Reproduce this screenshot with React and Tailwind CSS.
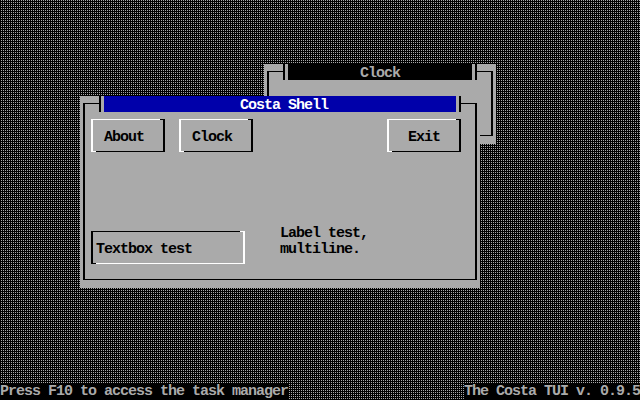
import React from "react";

function Button({ label, pad, className = "" }) {
  return (
    <div className={"h-12 w-20 shrink-0 pl-[3px] pt-[7px] " + className}>
      <div className="relative h-[33px] w-[74px] border-b border-l-2 border-r-2 border-t border-b-black border-l-white border-r-black border-t-white">
        <div className="absolute -top-px right-[-2px] h-px w-[5px] bg-black" />
        <div className="absolute -bottom-px left-[-2px] h-px w-[5px] bg-white" />
        <div className={"mt-2 h-4 whitespace-pre text-black " + pad}>{label}</div>
      </div>
    </div>
  );
}

function TitleBar({ title, active, pad }) {
  return (
    <div className="flex h-4 shrink-0">
      <div className="flex h-4 w-6 shrink-0">
        <div className="w-[3px] shrink-0" />
        <div className="mt-[7px] h-[9px] w-4 shrink-0 border-l-2 border-t border-black" />
        <div className="h-4 w-[2px] shrink-0 bg-black" />
      </div>
      <div
        className={
          "h-4 flex-1 whitespace-pre " +
          (active ? "bg-[#0000aa] text-white " : "bg-black text-[#aaaaaa] ") +
          pad
        }
      >
        {title}
      </div>
      <div className="flex h-4 w-6 shrink-0">
        <div className="w-[3px] shrink-0" />
        <div className="h-4 w-[2px] shrink-0 bg-black" />
        <div className="mt-[7px] h-[9px] w-4 shrink-0 border-r-2 border-t border-black" />
      </div>
    </div>
  );
}

export default function App() {
  return (
    <div className="flex h-[400px] w-[640px] flex-col bg-black bg-[conic-gradient(#a8a8a8_0_25%,#000000_0_100%)] bg-[length:2px_2px] font-['Liberation_Mono','DejaVu_Sans_Mono',monospace] text-[15px] font-bold leading-5 tracking-[-1px]">
      <div className="relative flex-1">
        {/* Clock window (inactive) */}
        <div className="absolute left-[264px] top-[64px] flex h-[80px] w-[232px] flex-col bg-[#aaaaaa]">
          <TitleBar title="Clock" active={false} pad="pl-[72px]" />
          <div className="mx-[3px] mb-2 flex-1 border-x-2 border-b border-black" />
        </div>

        {/* Costa Shell window (active) */}
        <div className="absolute left-[80px] top-[96px] flex h-[192px] w-[400px] flex-col bg-[#aaaaaa]">
          <TitleBar title="Costa Shell" active={true} pad="pl-[136px]" />
          <div className="mx-[3px] mb-2 flex-1 border-x-2 border-b border-black">
            <div className="ml-[3px] flex flex-col">
              <div className="flex h-12">
                <Button label="About" pad="pl-[11px]" />
                <Button label="Clock" pad="pl-[11px]" className="ml-2" />
                <Button label="Exit" pad="pl-[19px]" className="ml-[128px]" />
              </div>
              <div className="mt-16 flex h-12">
                <div className="h-12 w-[160px] shrink-0 pl-[3px] pt-[7px]">
                  <div className="relative h-[33px] w-[154px] border-b border-l-2 border-r-2 border-t border-b-white border-l-black border-r-white border-t-black">
                    <div className="absolute -top-px right-[-2px] h-px w-[5px] bg-white" />
                    <div className="absolute -bottom-px left-[-2px] h-px w-[5px] bg-black" />
                    <div className="mt-2 h-4 whitespace-pre pl-[3px] text-black">Textbox test</div>
                  </div>
                </div>
                <div className="ml-8 flex flex-col whitespace-pre text-black">
                  <div className="h-4">Label test,</div>
                  <div className="h-4">multiline.</div>
                </div>
              </div>
            </div>
          </div>
        </div>
      </div>

      {/* Status bar */}
      <div className="flex h-4 shrink-0 justify-between">
        <div className="h-4 w-[288px] whitespace-pre bg-black leading-4 text-[#aaaaaa]">Press F10 to access the task manager</div>
        <div className="h-4 w-[176px] whitespace-pre bg-black leading-4 text-[#aaaaaa]">The Costa TUI v. 0.9.5</div>
      </div>
    </div>
  );
}
